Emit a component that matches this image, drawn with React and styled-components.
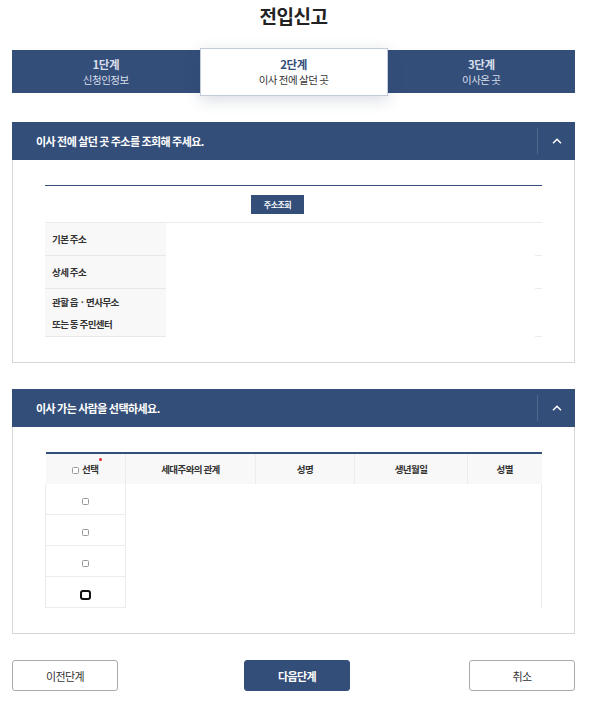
import React from "react";
import styled, { createGlobalStyle } from "styled-components";

const NAVY = "#344e7a";

const GlobalStyle = createGlobalStyle`
  body {
    margin: 0;
    background: #fff;
    font-family: "Noto Sans CJK KR", "Noto Sans", sans-serif;
    color: #333;
  }
`;

const Page = styled.div`
  width: 563px;
  margin-left: 12px;
  padding-bottom: 14px;
`;

const Title = styled.h1`
  margin: 0;
  height: 34px;
  padding-top: 1px;
  text-align: center;
  font-size: 19px;
  font-weight: 700;
  line-height: 30px;
  color: #222;
  letter-spacing: -0.5px;
`;

const Steps = styled.div`
  display: flex;
  margin-top: 15px;
  height: 43px;
  background: ${NAVY};
`;

const Step = styled.div`
  flex: ${(p) => (p.$active ? "0 0 186px" : "1")};
  display: flex;
  flex-direction: column;
  align-items: center;
  justify-content: center;
  position: relative;
  z-index: ${(p) => (p.$active ? 1 : 0)};
  margin: ${(p) => (p.$active ? "-2px 0 -3px" : "0")};
  background: ${(p) => (p.$active ? "#fff" : "transparent")};
  border: ${(p) => (p.$active ? "1px solid #c3cbdb" : "none")};
  box-shadow: ${(p) => (p.$active ? "0 4px 14px rgba(40, 60, 100, 0.18)" : "none")};
  color: ${(p) => (p.$active ? NAVY : "#d9dfea")};
`;

const StepNum = styled.div`
  font-size: 11.5px;
  font-weight: 700;
  line-height: 16px;
  letter-spacing: -0.5px;
`;

const StepName = styled.div`
  font-size: 10.5px;
  line-height: 16px;
  letter-spacing: -0.5px;
  color: ${(p) => (p.$active ? "#333" : "#d9dfea")};
`;

const Section = styled.section`
  margin-top: ${(p) => p.$top}px;
`;

const SectionHead = styled.div`
  display: flex;
  align-items: center;
  height: 38px;
  background: ${NAVY};
  color: #fff;
`;

const SectionTitle = styled.h2`
  flex: 1;
  margin: 0;
  padding-left: 24px;
  font-size: 11px;
  font-weight: 700;
  letter-spacing: -0.55px;
`;

const Toggle = styled.button`
  width: 38px;
  height: 26px;
  display: flex;
  align-items: center;
  justify-content: center;
  background: none;
  border: none;
  border-left: 1px solid rgba(255, 255, 255, 0.15);
  padding: 0;
  cursor: pointer;
`;

const SectionBody = styled.div`
  border: 1px solid #d6d6d6;
  border-top: none;
  padding: 25px 32px;
`;

const TopRule = styled.div`
  height: 1px;
  background: ${NAVY};
`;

const ButtonRow = styled.div`
  display: flex;
  justify-content: center;
  padding: 9px 32px 8px 0;
  border-bottom: 1px solid #ebebeb;
`;

const SmallButton = styled.button`
  height: 19px;
  width: 53px;
  padding: 0;
  border: none;
  background: ${NAVY};
  color: #fff;
  font-family: inherit;
  font-size: 8px;
  font-weight: 700;
  letter-spacing: -0.5px;
`;

const InfoRow = styled.div`
  display: flex;
  min-height: ${(p) => p.$h}px;
`;

const InfoLabel = styled.div`
  width: 121px;
  box-sizing: border-box;
  padding: 0 7px;
  display: flex;
  flex-direction: column;
  justify-content: center;
  background: #f8f8f8;
  border-bottom: 1px solid #e8e8e8;
  font-size: 9.5px;
  font-weight: 700;
  line-height: 22px;
  letter-spacing: -0.6px;
  color: #333;
`;

const InfoValue = styled.div`
  flex: 1;
  background: linear-gradient(#ececec, #ececec) right bottom / 7px 1px no-repeat;
`;

const Grid = styled.table`
  width: 100%;
  border-collapse: collapse;
  border-top: 2px solid ${NAVY};
  table-layout: fixed;
`;

const Th = styled.th`
  height: 30px;
  background: #f8f8f8;
  border-left: 1px solid #ececec;
  font-size: 9.5px;
  font-weight: 700;
  color: #333;
  letter-spacing: -0.6px;
  padding: 0;
  &:first-child {
    border-left: none;
  }
`;

const Td = styled.td`
  height: 30px;
  padding: 0;
  text-align: center;
  border-left: ${(p) => (p.$first ? "1px solid #ececec" : "none")};
  border-right: ${(p) => (p.$first || p.$last ? "1px solid #ececec" : "none")};
  border-bottom: ${(p) => (p.$first ? "1px solid #ececec" : "none")};
`;

const Check = styled.span`
  display: inline-block;
  vertical-align: middle;
  box-sizing: border-box;
  width: ${(p) => (p.$focus ? 11 : 7)}px;
  height: ${(p) => (p.$focus ? 10 : 7)}px;
  border: ${(p) => (p.$focus ? "2px solid #111" : "1px solid #999")};
  border-radius: ${(p) => (p.$focus ? 3 : 1.5)}px;
  background: #fff;
`;

const Required = styled.span`
  position: relative;
  margin-left: 3px;
  &::after {
    content: "";
    position: absolute;
    right: -4px;
    top: -4px;
    width: 3px;
    height: 3px;
    border-radius: 50%;
    background: #e8242b;
  }
`;

const Footer = styled.div`
  display: flex;
  justify-content: space-between;
  margin-top: 26px;
`;

const FooterButton = styled.button`
  width: 106px;
  height: 31px;
  margin-left: ${(p) => (p.$primary ? 7 : 0)}px;
  border-radius: 3px;
  border: 1px solid ${(p) => (p.$primary ? NAVY : "#aaa")};
  background: ${(p) => (p.$primary ? NAVY : "#fff")};
  color: ${(p) => (p.$primary ? "#fff" : "#333")};
  font-family: inherit;
  font-size: 11px;
  font-weight: ${(p) => (p.$primary ? 700 : 400)};
  letter-spacing: -0.6px;
`;

const Caret = () => (
  <svg width="10" height="6" viewBox="0 0 10 6" fill="none">
    <path d="M1 5.2L5 1.2L9 5.2" stroke="#fff" strokeWidth="1.5" />
  </svg>
);

const people = [false, false, false, true];

export default function App() {
  return (
    <>
      <GlobalStyle />
      <Page>
        <Title>전입신고</Title>
        <Steps>
          <Step>
            <StepNum>1단계</StepNum>
            <StepName>신청인정보</StepName>
          </Step>
          <Step $active>
            <StepNum>2단계</StepNum>
            <StepName $active>이사 전에 살던 곳</StepName>
          </Step>
          <Step>
            <StepNum>3단계</StepNum>
            <StepName>이사온 곳</StepName>
          </Step>
        </Steps>

        <Section $top={29}>
          <SectionHead>
            <SectionTitle>이사 전에 살던 곳 주소를 조회해 주세요.</SectionTitle>
            <Toggle aria-label="접기">
              <Caret />
            </Toggle>
          </SectionHead>
          <SectionBody>
            <TopRule />
            <ButtonRow>
              <SmallButton>주소조회</SmallButton>
            </ButtonRow>
            <InfoRow $h={33}>
              <InfoLabel>기본 주소</InfoLabel>
              <InfoValue />
            </InfoRow>
            <InfoRow $h={33}>
              <InfoLabel>상세 주소</InfoLabel>
              <InfoValue />
            </InfoRow>
            <InfoRow $h={48}>
              <InfoLabel>
                <span>관할 읍 · 면사무소</span>
                <span>또는 동 주민센터</span>
              </InfoLabel>
              <InfoValue />
            </InfoRow>
          </SectionBody>
        </Section>

        <Section $top={26}>
          <SectionHead>
            <SectionTitle>이사 가는 사람을 선택하세요.</SectionTitle>
            <Toggle aria-label="접기">
              <Caret />
            </Toggle>
          </SectionHead>
          <SectionBody>
            <Grid>
              <colgroup>
                <col style={{ width: 80 }} />
                <col style={{ width: 130 }} />
                <col style={{ width: 99 }} />
                <col style={{ width: 113 }} />
                <col />
              </colgroup>
              <thead>
                <tr>
                  <Th>
                    <Check />
                    <Required>선택</Required>
                  </Th>
                  <Th>세대주와의 관계</Th>
                  <Th>성명</Th>
                  <Th>생년월일</Th>
                  <Th>성별</Th>
                </tr>
              </thead>
              <tbody>
                {people.map((focus, i) => (
                  <tr key={i}>
                    <Td $first>
                      <Check $focus={focus} />
                    </Td>
                    <Td />
                    <Td />
                    <Td />
                    <Td $last />
                  </tr>
                ))}
              </tbody>
            </Grid>
          </SectionBody>
        </Section>

        <Footer>
          <FooterButton>이전단계</FooterButton>
          <FooterButton $primary>다음단계</FooterButton>
          <FooterButton>취소</FooterButton>
        </Footer>
      </Page>
    </>
  );
}
